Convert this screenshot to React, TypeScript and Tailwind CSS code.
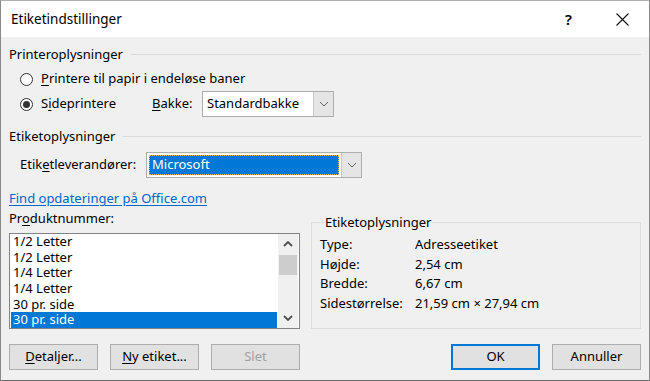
import React from "react";

function Chevron({ up = false, bold = false }: { up?: boolean; bold?: boolean }) {
  return (
    <svg width="10" height="6" viewBox="0 0 10 6" className="block">
      <polyline
        points={up ? "1,5 5,1 9,5" : "1,1 5,5 9,1"}
        fill="none"
        stroke={bold ? "#505050" : "#606060"}
        strokeWidth={bold ? 1.8 : 1}
      />
    </svg>
  );
}

function Radio({ checked = false }: { checked?: boolean }) {
  return (
    <span className="w-[13px] h-[13px] rounded-full border border-[#333333] bg-white flex items-center justify-center shrink-0">
      {checked && <span className="w-[7px] h-[7px] rounded-full bg-[#333333]" />}
    </span>
  );
}

function Heading({ children }: { children: React.ReactNode }) {
  return (
    <div className="h-[16px] flex items-center gap-[8px]">
      <span className="leading-[16px]">{children}</span>
      <div className="flex-1 h-px bg-[#dadada]" />
    </div>
  );
}

function Select({ value, focused = false, w }: { value: string; focused?: boolean; w: string }) {
  return (
    <div className={`${w} h-[26px] flex border border-[#adadad] bg-white`}>
      <div className="flex-1 flex items-center p-[2px]">
        {focused ? (
          <div className="w-full h-full bg-[#0078d7] text-white border border-dotted border-[#f4b860] flex items-center pl-[2px]">
            {value}
          </div>
        ) : (
          <span className="pl-[2px]">{value}</span>
        )}
      </div>
      <div className="w-[20px] bg-[#e5e5e5] border-l border-[#c8c8c8] flex items-center justify-center">
        <Chevron />
      </div>
    </div>
  );
}

function Button({ children, primary = false, disabled = false }: { children: React.ReactNode; primary?: boolean; disabled?: boolean }) {
  return (
    <button
      className={`w-[89px] h-[26px] bg-[#e1e1e1] flex items-center justify-center ${
        primary ? "border-2 border-[#0078d7]" : "border border-[#adadad]"
      } ${disabled ? "text-[#a0a0a0]" : "text-black"}`}
    >
      {children}
    </button>
  );
}

const products = ["1/2 Letter", "1/2 Letter", "1/4 Letter", "1/4 Letter", "30 pr. side", "30 pr. side"];

const info: [string, string][] = [
  ["Type:", "Adresseetiket"],
  ["Højde:", "2,54 cm"],
  ["Bredde:", "6,67 cm"],
  ["Sidestørrelse:", "21,59 cm × 27,94 cm"],
];

export default function App() {
  return (
    <div className="w-[650px] h-[381px] flex flex-col border-x border-b border-t border-x-[#8a8a8a] border-b-[#6a6a6a] border-t-[#b0b0b0] bg-[#f0f0f0] font-['Noto_Sans',sans-serif] text-[13px] text-black overflow-hidden">
      {/* titellinje */}
      <div className="h-[36px] bg-white flex items-center pl-[10px] pr-[20px] shrink-0">
        <span className="flex-1 text-[13.5px]">Etiketindstillinger</span>
        <span className="text-[15px] font-semibold mr-[44px]">?</span>
        <svg width="13" height="13" viewBox="0 0 13 13">
          <path d="M0.5 0.5 L12.5 12.5 M12.5 0.5 L0.5 12.5" stroke="#111" strokeWidth="1.1" />
        </svg>
      </div>

      <div className="flex-1 flex flex-col px-[8px]">
        <div className="mt-[9px]">
          <Heading>Printeroplysninger</Heading>
        </div>

        <div className="mt-[5px] h-[24px] flex items-center pl-[11px]">
          <Radio />
          <span className="ml-[8px]">
            <u className="underline-offset-2">P</u>rintere til papir i endeløse baner
          </span>
        </div>

        <div className="h-[26px] flex items-center pl-[11px]">
          <Radio checked />
          <span className="ml-[8px] w-[111px]">
            S<u className="underline-offset-2">i</u>deprintere
          </span>
          <span className="w-[50px]">
            <u className="underline-offset-2">B</u>akke:
          </span>
          <Select value="Standardbakke" w="w-[132px]" />
        </div>

        <div className="mt-[11px]">
          <Heading>Etiketoplysninger</Heading>
        </div>

        <div className="mt-[8px] h-[26px] flex items-center pl-[11px]">
          <span className="w-[126px]">
            Etik<u className="underline-offset-2">e</u>tleverandører:
          </span>
          <Select value="Microsoft" focused w="w-[216px]" />
        </div>

        <div className="mt-[13px] h-[16px] flex items-center">
          <span className="text-[#0066cc] underline underline-offset-2">Find opdateringer på Office.com</span>
        </div>

        <div className="mt-[4px] flex">
          <div className="w-[291px] flex flex-col">
            <div className="h-[16px] flex items-center">
              <span>
                Pr<u className="underline-offset-2">o</u>duktnummer:
              </span>
            </div>
            <div className="mt-[6px] h-[96px] border border-[#828282] bg-white flex">
              <div className="flex-1 flex flex-col px-[1px]">
                {products.map((p, i) => (
                  <div
                    key={i}
                    className={`h-[15.66px] leading-[15.66px] pl-[2px] ${
                      i === products.length - 1 ? "bg-[#0078d7] text-white" : ""
                    }`}
                  >
                    {p}
                  </div>
                ))}
              </div>
              <div className="w-[20px] mr-[1px] bg-[#f0f0f0] flex flex-col">
                <div className="h-[20px] flex items-center justify-center">
                  <Chevron up bold />
                </div>
                <div className="flex-1">
                  <div className="mt-[1px] mx-[1px] h-[20px] bg-[#cdcdcd]" />
                </div>
                <div className="h-[20px] flex items-center justify-center">
                  <Chevron bold />
                </div>
              </div>
            </div>
          </div>

          <fieldset className="ml-[11px] mt-[3px] h-[115px] flex-1 border border-[#dcdcdc] pl-[8px] pt-[5px]">
            <legend className="ml-[4px] px-[1px] leading-[16px]">Etiketoplysninger</legend>
            {info.map(([k, v]) => (
              <div key={k} className="h-[19.5px] flex items-center">
                <span className="w-[95px]">{k}</span>
                <span>{v}</span>
              </div>
            ))}
          </fieldset>
        </div>

        <div className="mt-[15px] h-[26px] flex gap-[12px]">
          <Button>
            <span>
              <u className="underline-offset-2">D</u>etaljer...
            </span>
          </Button>
          <Button>
            <span>
              <u className="underline-offset-2">N</u>y etiket...
            </span>
          </Button>
          <Button disabled>Slet</Button>
          <div className="flex-1" />
          <Button primary>OK</Button>
          <Button>Annuller</Button>
        </div>
      </div>
    </div>
  );
}
